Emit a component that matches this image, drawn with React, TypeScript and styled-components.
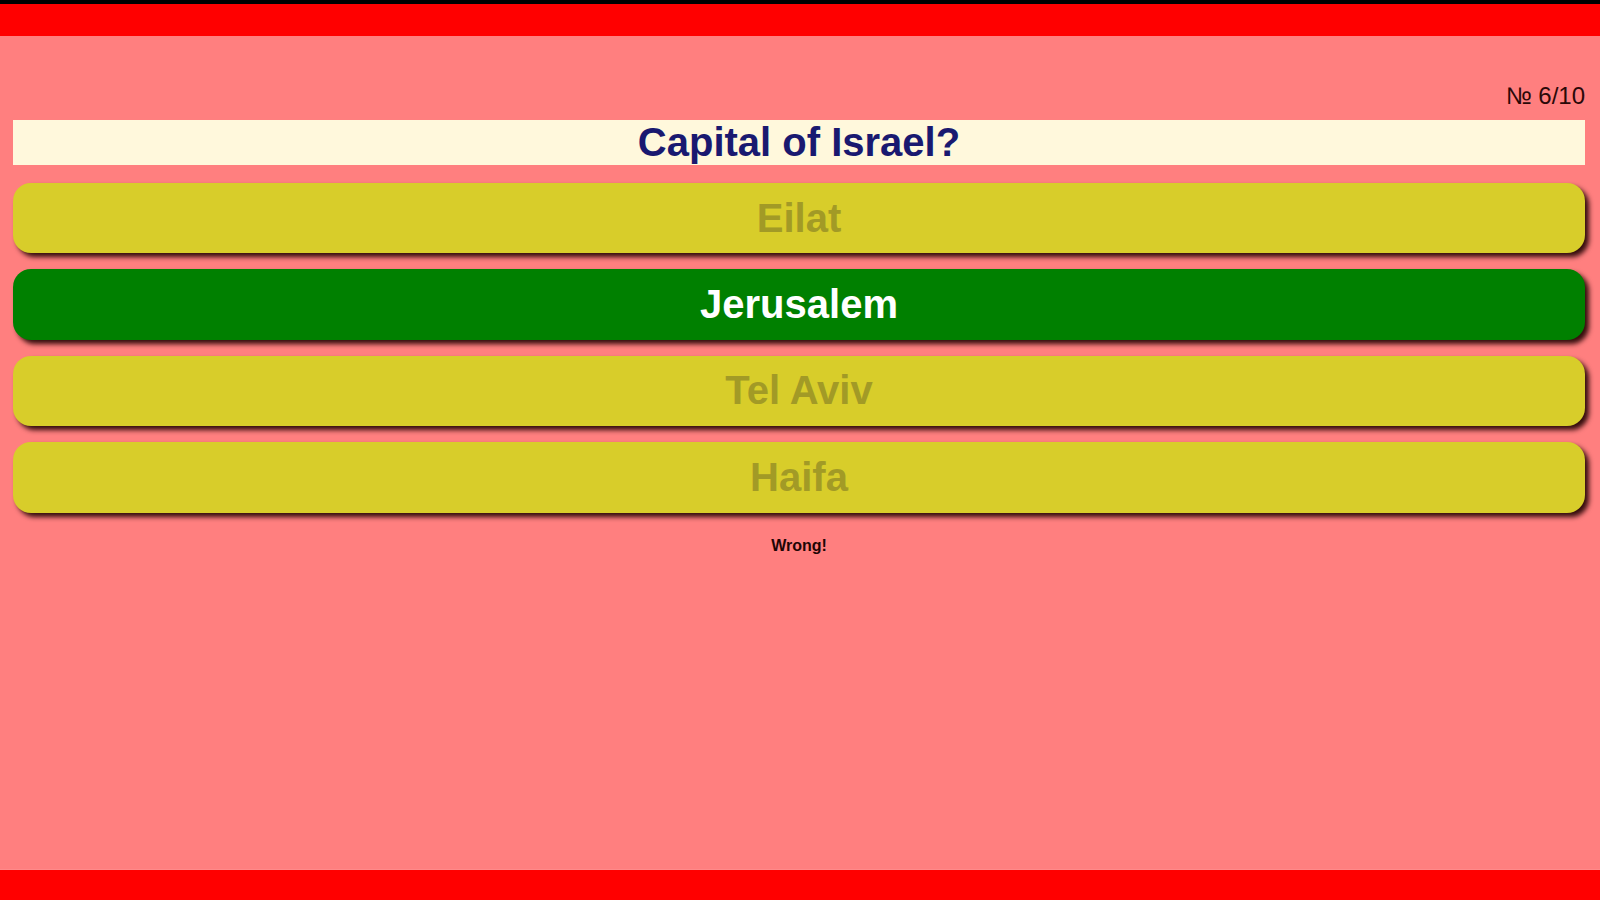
import React from 'react'
import styled, { createGlobalStyle } from 'styled-components'

const GlobalStyle = createGlobalStyle`
  html, body {
    margin: 0;
    padding: 0;
    height: 100%;
  }
  body {
    font-family: "Liberation Sans", Arial, sans-serif;
    background: #ff7f7f;
  }
  #root {
    min-height: 100vh;
  }
`

const Page = styled.div`
  min-height: 100vh;
  display: flex;
  flex-direction: column;
  background: #ff7f7f;
`

const TopBar = styled.header`
  height: 32px;
  background: #ff0000;
  border-top: 4px solid #000;
`

const Main = styled.main`
  flex: 1;
  display: flex;
  flex-direction: column;
  padding: 46px 15px 0 13px;
`

const Counter = styled.div`
  text-align: right;
  font-size: 24px;
  color: #2a0808;
  margin-bottom: 10px;
`

const Question = styled.h1`
  margin: 0 0 18px;
  background: #fff8dc;
  color: #191970;
  font-size: 40px;
  font-weight: bold;
  text-align: center;
  line-height: 45px;
`

const Answers = styled.div`
  display: flex;
  flex-direction: column;
  gap: 16px;
`

const Answer = styled.button<{ $correct?: boolean }>`
  height: 70.4px;
  border: none;
  border-radius: 18px;
  font-family: "Liberation Sans", Arial, sans-serif;
  font-size: 40px;
  font-weight: bold;
  background: ${({ $correct }) => ($correct ? '#008000' : '#d8cd2a')};
  color: ${({ $correct }) => ($correct ? '#ffffff' : '#a29a26')};
  box-shadow: 4px 4px 5px rgba(30, 0, 0, 0.9);
  cursor: pointer;
`

const Result = styled.p`
  margin: 24px 0 0;
  text-align: center;
  font-size: 16px;
  font-weight: bold;
  color: #1e0505;
`

const BottomBar = styled.footer`
  height: 30px;
  background: #ff0000;
  border-top: 1px solid #ff8a8a;
`

const answers = [
  { text: 'Eilat', correct: false },
  { text: 'Jerusalem', correct: true },
  { text: 'Tel Aviv', correct: false },
  { text: 'Haifa', correct: false },
]

export default function App() {
  return (
    <Page>
      <GlobalStyle />
      <TopBar />
      <Main>
        <Counter>№ 6/10</Counter>
        <Question>Capital of Israel?</Question>
        <Answers>
          {answers.map((a) => (
            <Answer key={a.text} $correct={a.correct}>
              {a.text}
            </Answer>
          ))}
        </Answers>
        <Result>Wrong!</Result>
      </Main>
      <BottomBar />
    </Page>
  )
}
